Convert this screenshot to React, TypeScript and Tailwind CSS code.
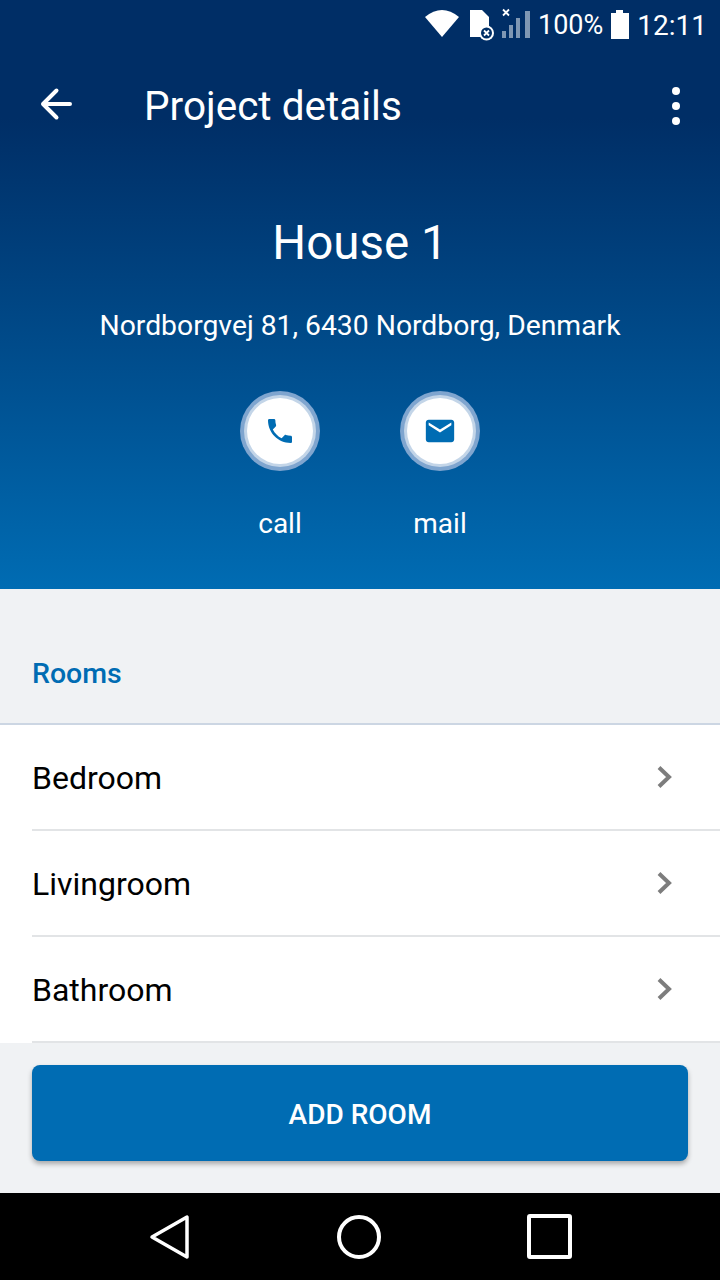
function StatusBar() {
  return (
    <div className="flex h-[48px] items-center justify-end pr-[13px] text-white">
      <svg width="34" height="28" viewBox="0 0 36 28" className="mt-[-2px]" preserveAspectRatio="none">
        <path d="M0 8 Q18 -6 36 8 L18 28 Z" fill="#fff" />
      </svg>
      <svg width="26" height="32" viewBox="0 0 26 32" className="ml-[10px] mt-[2px]">
        <path d="M1 1 H13 L20 8 V28 H1 Z" fill="#fff" />
        <circle cx="17.500" cy="24" r="7.500" fill="#fff" />
        <circle cx="17.500" cy="24" r="5.500" fill="#002f67" />
        <path d="M15 21.500 L20 26.500 M20 21.500 L15 26.500" stroke="#fff" strokeWidth="1.800" />
      </svg>
      <svg width="30" height="32" viewBox="0 0 30 32" className="ml-[5px] mt-[-4px]">
        <path d="M3 3.500 L9 9.500 M9 3.500 L3 9.500" stroke="#fff" strokeWidth="1.800" />
        <rect x="2" y="25" width="4" height="7" fill="#7f97b3" />
        <rect x="9" y="19" width="4" height="13" fill="#7f97b3" />
        <rect x="16" y="12" width="4" height="20" fill="#7f97b3" />
        <rect x="25" y="5" width="5" height="27" fill="#7f97b3" />
      </svg>
      <span className="ml-[8px] mt-[3px] text-[27px] leading-none">100%</span>
      <svg width="20" height="30" viewBox="0 0 20 30" className="ml-[7px] mt-[1px]">
        <path d="M6 0 H13 V3 H19 V29 H1 V3 H6 Z" fill="#fff" />
      </svg>
      <span className="ml-[7px] mt-[3px] text-[28px] leading-none">12:11</span>
    </div>
  );
}

function ContactButton({ label, icon }: { label: string; icon: React.ReactNode }) {
  return (
    <div className="flex w-[80px] flex-col items-center">
      <div className="flex h-[80px] w-[80px] items-center justify-center rounded-full bg-[#7fa5cf]">
        <div className="flex h-[66px] w-[66px] items-center justify-center rounded-full bg-white shadow-[0_0_0_3px_#c3d5e8]">
          {icon}
        </div>
      </div>
      <span className="mt-[34px] text-[28px] leading-[38px] text-white">{label}</span>
    </div>
  );
}

function RoomRow({ name }: { name: string }) {
  return (
    <div className="ml-[32px] flex h-[106px] items-center justify-between border-b-2 border-[#e2e4e6] pr-[46px]">
      <span className="mt-[2px] text-[32px] text-black">{name}</span>
      <svg width="18" height="24" viewBox="0 0 18 24">
        <path d="M3 2.500 L13 12 L3 21.500" fill="none" stroke="#7d7d7d" strokeWidth="4" />
      </svg>
    </div>
  );
}

export default function App() {
  return (
    <div className="flex h-[1280px] w-[720px] flex-col overflow-hidden bg-[#f0f2f4] font-['Roboto',sans-serif]">
      <div className="h-[589px] bg-gradient-to-b from-[#002e66] via-[#002e66] via-[20%] to-[#006cb3]">
        <StatusBar />
        <div className="flex h-[116px] items-center pl-[38px] pr-[40px]">
          <svg width="36" height="34" viewBox="0 0 36 34" className="mt-[-4px]">
            <path d="M32 17 H5 M18.500 3.500 L5 17 L18.500 30.500" fill="none" stroke="#fff" strokeWidth="4" strokeLinecap="round" strokeLinejoin="round" />
          </svg>
          <h2 className="ml-[70px] flex-1 text-[40.500px] leading-none text-white">Project details</h2>
          <div className="flex flex-col gap-[7px]">
            <span className="h-[8px] w-[8px] rounded-full bg-white" />
            <span className="h-[8px] w-[8px] rounded-full bg-white" />
            <span className="h-[8px] w-[8px] rounded-full bg-white" />
          </div>
        </div>
        <h1 className="mt-[51px] text-center text-[47.500px] leading-[56px] text-white">House 1</h1>
        <p className="mt-[36px] text-center text-[28.300px] leading-[38px] text-white">
          Nordborgvej 81, 6430 Nordborg, Denmark
        </p>
        <div className="mt-[46px] flex justify-center gap-[80px]">
          <ContactButton
            label="call"
            icon={
              <svg width="32" height="32" viewBox="0 0 24 24" fill="#006cb3">
                <path d="M6.620 10.790c1.440 2.830 3.760 5.140 6.590 6.590l2.200-2.200c.270-.270.670-.360 1.020-.240 1.120.370 2.330.570 3.570.570.550 0 1 .450 1 1V20c0 .550-.450 1-1 1-9.390 0-17-7.610-17-17 0-.550.450-1 1-1h3.500c.550 0 1 .450 1 1 0 1.250.200 2.450.570 3.570.110.350.030.740-.250 1.020l-2.200 2.200z" />
              </svg>
            }
          />
          <ContactButton
            label="mail"
            icon={
              <svg width="34" height="34" viewBox="0 0 24 24" fill="#006cb3">
                <path d="M20 4H4c-1.100 0-2 .900-2 2v12c0 1.100.900 2 2 2h16c1.100 0 2-.900 2-2V6c0-1.100-.900-2-2-2zm0 4l-8 5-8-5V6l8 5 8-5v2z" />
              </svg>
            }
          />
        </div>
      </div>

      <div className="flex h-[136px] items-center border-b-2 border-[#ccd6e3] pl-[32px] pt-[36px]">
        <span className="text-[28.500px] font-medium text-[#006cb3]">Rooms</span>
      </div>

      <div className="bg-white">
        <RoomRow name="Bedroom" />
        <RoomRow name="Livingroom" />
        <RoomRow name="Bathroom" />
      </div>

      <div className="flex h-[150px] items-start px-[32px] pt-[22px]">
        <button className="h-[96px] w-full rounded-[8px] bg-[#006cb3] pt-[4px] text-[28px] font-medium text-white shadow-[0_3px_5px_rgba(0,0,0,0.3)]">
          ADD ROOM
        </button>
      </div>

      <div className="flex h-[87px] items-center bg-black">
        <div className="flex w-full items-center justify-between pl-[147px] pr-[147px]">
          <svg width="44" height="46" viewBox="0 0 44 46">
            <path d="M40 3 V43 L5 23 Z" fill="none" stroke="#fff" strokeWidth="3.500" strokeLinejoin="round" />
          </svg>
          <svg width="44" height="44" viewBox="0 0 44 44">
            <circle cx="22" cy="22" r="20" fill="none" stroke="#fff" strokeWidth="4" />
          </svg>
          <svg width="46" height="46" viewBox="0 0 46 46">
            <rect x="2" y="2" width="41" height="41" rx="1" fill="none" stroke="#fff" strokeWidth="4" />
          </svg>
        </div>
      </div>
    </div>
  );
}
